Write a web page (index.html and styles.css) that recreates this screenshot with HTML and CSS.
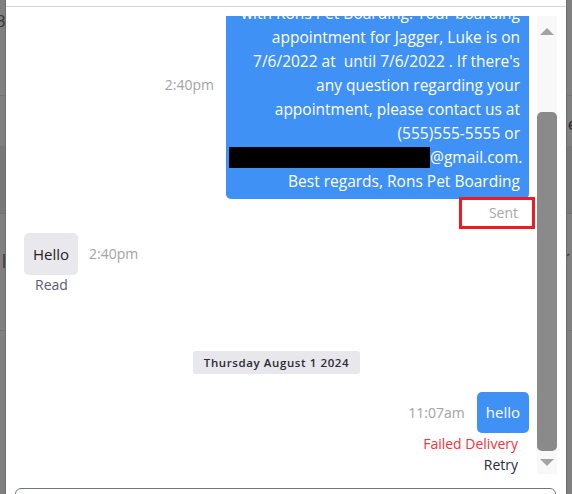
FILE: index.html
```html
<!DOCTYPE html>
<html>
<head>
<meta charset="utf-8">
<link rel="stylesheet" href="styles.css">
</head>
<body>
<div class="page">
  <div class="strip strip-left">
    <div class="bg-text bg-eight">8</div>
    <div class="bg-line l1"></div>
    <div class="bg-band"></div>
    <div class="bg-text bg-bar">|</div>
    <div class="bg-line l3"></div>
  </div>
  <div class="modal">
    <div class="modal-head"></div>
    <div class="modal-body">
      <div class="chat">
        <div class="chat-view">
          <div class="chat-list">
            <div class="msg out">
              <div class="msg-row">
                <span class="time">2:40pm</span>
                <div class="bubble blue big">
                  Hi Luke, thank you for booking<br>
                  with Rons Pet Boarding. Your boarding<br>
                  appointment for Jagger, Luke is on<br>
                  7/6/2022 at &nbsp;until 7/6/2022 . If there's<br>
                  any question regarding your<br>
                  appointment, please contact us at<br>
                  (555)555-5555 or<br>
                  <span class="redact"></span>@gmail.com.<br>
                  Best regards, Rons Pet Boarding
                </div>
              </div>
              <div class="status sent"><span class="sent-text">Sent</span><span class="annot"></span></div>
            </div>

            <div class="msg in">
              <div class="msg-row">
                <div class="bubble grey">Hello</div>
                <span class="time">2:40pm</span>
              </div>
              <div class="status read">Read</div>
            </div>

            <div class="date-row"><span class="date-pill">Thursday August 1 2024</span></div>

            <div class="msg out">
              <div class="msg-row">
                <span class="time">11:07am</span>
                <div class="bubble blue small">hello</div>
              </div>
              <div class="status failed">Failed Delivery</div>
              <div class="status retry">Retry</div>
            </div>
          </div>
        </div>
        <div class="scrollbar">
          <span class="arrow up"></span>
          <div class="track"><div class="thumb"></div></div>
          <span class="arrow down"></span>
        </div>
      </div>
      <div class="input-box"></div>
    </div>
  </div>
  <div class="strip strip-right">
    <div class="bg-line l1"></div>
    <div class="bg-text bg-e">e</div>
    <div class="bg-band"></div>
    <div class="bg-text bg-r">r</div>
    <div class="bg-line l3"></div>
  </div>
</div>
</body>
</html>
```

FILE: styles.css
```css
* { box-sizing: border-box; }
html, body { margin: 0; padding: 0; }
body {
  background: #808080;
  font-family: "Open Sans", "Noto Sans", sans-serif;
  width: 572px;
  height: 494px;
  overflow: hidden;
}
.page {
  display: flex;
  height: 494px;
}
.strip {
  position: relative;
  overflow: hidden;
  background: #808080;
  flex-shrink: 0;
}
.strip-left { width: 6px; border-right: 1px solid #6e6e6e; }
.strip-right { width: 6px; border-left: 1px solid #6e6e6e; }
.bg-line { position: absolute; left: 0; right: 0; height: 1px; background: #757575; }
.bg-line.l1 { top: 95px; }
.bg-line.l3 { top: 330px; }
.bg-band { position: absolute; left: 0; right: 0; top: 146px; height: 68px; background: #787878; border-bottom: 1px solid #707070; }
.bg-text { position: absolute; font-family: "Liberation Sans", sans-serif; font-size: 17px; color: #2a2a2a; line-height: 1; }
.bg-eight { top: 13px; left: -4px; color: #3a3a3a; }
.bg-bar { top: 252px; left: 2px; font-size: 15px; }
.bg-e { top: 116px; left: 1px; }
.bg-r { top: 249px; left: -3px; }

.modal {
  width: 560px;
  flex-shrink: 0;
  background: #fff;
  display: flex;
  flex-direction: column;
  overflow: hidden;
}
.modal-head {
  height: 7px;
  flex-shrink: 0;
  border-bottom: 1px solid #d6d6d6;
}
.modal-body {
  flex-shrink: 0;
  padding: 9px 9px 0 9px;
  display: flex;
  flex-direction: column;
  gap: 14px;
}
.chat {
  display: flex;
  height: 458px;
  flex-shrink: 0;
}
.chat-view {
  flex: 1;
  overflow: hidden;
  padding: 0 8px 0 9px;
}
.chat-list {
  margin-top: -45px;
  display: flex;
  flex-direction: column;
}
.msg { display: flex; flex-direction: column; }
.msg.out { align-items: flex-end; }
.msg.in { align-items: flex-start; }
.msg-row { display: flex; align-items: center; }
.msg.out .msg-row { gap: 12px; }
.msg.in .msg-row { gap: 11px; }
.time {
  font-size: 14px;
  color: #a3a3a3;
  line-height: 20px;
}
.bubble {
  font-size: 15px;
  line-height: 24px;
  border-radius: 5px;
}
.bubble.blue {
  background: #3f91f5;
  color: #fff;
  text-align: right;
}
.bubble.big {
  width: 303px;
  font-size: 15.5px;
  padding: 6px 9px 6px 3px;
  border-top-left-radius: 0;
  border-top-right-radius: 0;
  white-space: nowrap;
}
.bubble.small {
  padding: 8px 9px 9px 9px;
  height: 41px;
}
.bubble.grey {
  background: #e9e8ed;
  color: #1e1e24;
  padding: 9px 9px;
  height: 42px;
}
.redact {
  display: inline-block;
  width: 201px;
  height: 21px;
  background: #000;
  vertical-align: -5px;
}
.status {
  font-size: 14px;
  line-height: 20px;
}
.msg.out .status { padding-right: 11px; }
.status.sent {
  position: relative;
  color: #a8a8a8;
  margin-top: 4px;
}
.annot {
  position: absolute;
  left: -30px;
  right: -6px;
  top: -6px;
  bottom: -6px;
  border: 3px solid #ed1c24;
}
.status.read {
  color: #5c5c6c;
  width: 55px;
  text-align: center;
}
.msg.in { margin-top: 10px; }
.date-row {
  display: flex;
  justify-content: center;
  margin-top: 56px;
}
.date-pill {
  background: #e8e7ec;
  border-radius: 3px;
  font-size: 11.5px;
  font-weight: 600;
  letter-spacing: 0.6px;
  color: #2b2b33;
  line-height: 23px;
  padding: 0 11px;
}
.date-row + .msg { margin-top: 18px; }
.status.failed { color: #f2323c; margin-top: 1px; }
.status.retry { color: #2a2a38; margin-top: 1px; }

.scrollbar {
  width: 20px;
  flex-shrink: 0;
  background: #f8f8f8;
  display: flex;
  flex-direction: column;
  align-items: center;
}
.arrow {
  width: 0; height: 0;
  border-left: 7px solid transparent;
  border-right: 7px solid transparent;
}
.arrow.up { border-bottom: 7px solid #a3a3a3; margin-top: 12px; }
.arrow.down { border-top: 7px solid #a3a3a3; margin-bottom: 8px; }
.track { flex: 1; width: 100%; display: flex; justify-content: center; padding-top: 77px; padding-bottom: 8px; }
.thumb { width: 10px; border-radius: 5px; background: #8a8a8a; flex: 1; }

.input-box {
  height: 30px;
  flex-shrink: 0;
  border: 1px solid #6f757c;
  border-radius: 6px;
  margin-right: 1px;
}
```
